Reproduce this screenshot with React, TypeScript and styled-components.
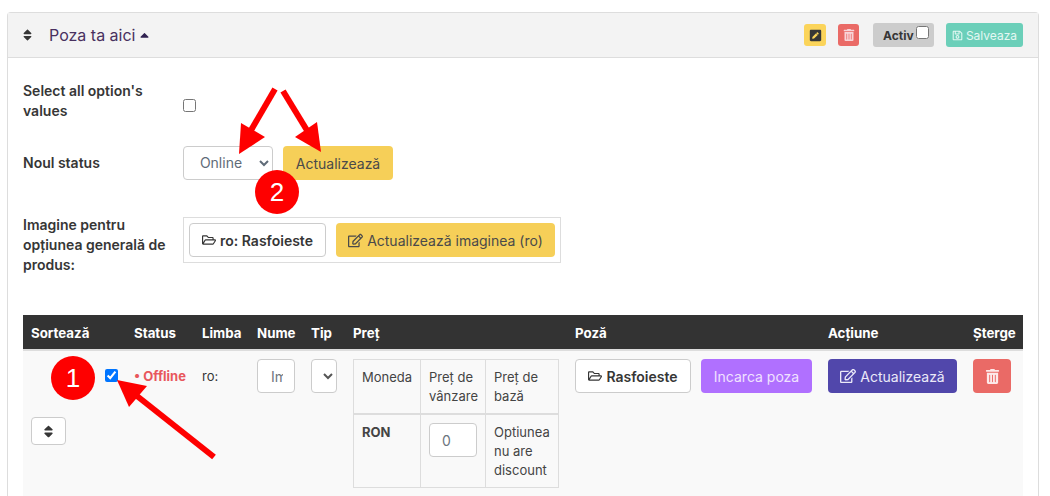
import React from "react";
import styled, { createGlobalStyle } from "styled-components";
import { FaSort, FaCaretUp, FaPenSquare, FaTrashAlt, FaRegSave, FaRegFolderOpen, FaRegEdit } from "react-icons/fa";

const Global = createGlobalStyle`
  html, body { margin: 0; padding: 0; background: #fff; height: 496px; overflow: hidden; }
  body { font-family: Inter, "Liberation Sans", sans-serif; color: #363636; font-size: 14px; }
  * { box-sizing: border-box; }
`;

const Page = styled.div`
  position: relative;
  height: 496px;
  padding: 12px 11px 0 7px;
  overflow: hidden;
`;

const Card = styled.section`
  border: 1px solid #ddd;
  border-bottom: 0;
  border-radius: 4px 4px 0 0;
  height: 520px;
`;

const CardHeader = styled.header`
  display: flex;
  align-items: center;
  height: 45px;
  padding: 0 15px;
  background: #f3f3f3;
  border-bottom: 1px solid #ddd;
`;

const SortGlyph = styled(FaSort)`
  width: 9px;
  height: 14px;
  color: #363636;
  margin-right: 17px;
`;

const Title = styled.span`
  font-size: 16px;
  color: #48305f;
`;

const Caret = styled(FaCaretUp)`
  width: 11px;
  height: 14px;
  color: #2f2150;
  margin-left: 4px;
`;

const Spacer = styled.div`
  flex: 1;
`;

const Mini = styled.button<{ $bg: string; $fg: string; $w: number; $mr: number }>`
  display: flex;
  align-items: center;
  justify-content: center;
  border: 0;
  padding: 0;
  width: ${(p) => p.$w}px;
  height: 22px;
  margin-right: ${(p) => p.$mr}px;
  border-radius: 3px;
  background: ${(p) => p.$bg};
  color: ${(p) => p.$fg};
  font-size: 12px;
`;

const ActiveBox = styled.label`
  display: flex;
  align-items: center;
  height: 24px;
  width: 61px;
  margin-right: 12px;
  padding-left: 10px;
  background: #ccc;
  border-radius: 3px;
  font-size: 12px;
  font-weight: 700;
  color: #363636;
`;

const ActiveCheck = styled.input`
  margin: -5px 0 0 2px;
  width: 13px;
  height: 13px;
`;

const SaveBtn = styled.button`
  display: flex;
  align-items: center;
  justify-content: center;
  gap: 3px;
  height: 24px;
  width: 77px;
  padding: 0;
  border: 0;
  border-radius: 3px;
  background: #6bcfb9;
  color: #e4f8f3;
  font: 400 12px Inter, sans-serif;
`;

const Body = styled.div`
  padding: 23px 15px 0;
`;

const Row = styled.div<{ $after: number; $align: string }>`
  display: grid;
  grid-template-columns: 160px 1fr;
  align-items: ${(p) => p.$align};
  margin-bottom: ${(p) => p.$after}px;
`;

const Label = styled.div`
  font-weight: 600;
  font-size: 14px;
  line-height: 20px;
  color: #363636;
  width: 150px;
`;

const Check = styled.input`
  margin: 9px 0 0;
  width: 13px;
  height: 13px;
  display: block;
`;

const StatusForm = styled.div`
  display: flex;
  gap: 10px;
`;

const Select = styled.select`
  width: 90px;
  height: 34px;
  padding: 0 4px 2px 2px;
  background: #fff;
  border: 1px solid #ccc;
  border-radius: 4px;
  font: 400 14px Inter, sans-serif;
  color: #5f6b78;
  text-align: center;
`;

const Button = styled.button<{ $bg?: string; $fg?: string; $w: number; $bold?: boolean }>`
  display: inline-flex;
  align-items: center;
  justify-content: center;
  gap: 4px;
  flex: none;
  width: ${(p) => p.$w}px;
  height: 34px;
  padding: 0;
  border: ${(p) => (p.$bg ? "0" : "1px solid #ccc")};
  border-radius: 4px;
  background: ${(p) => p.$bg ?? "#fff"};
  color: ${(p) => p.$fg ?? "#363636"};
  font: ${(p) => (p.$bold ? 600 : 400)} 14px Inter, sans-serif;
`;

const ImageBox = styled.div`
  display: inline-flex;
  justify-self: start;
  gap: 10px;
  margin-top: 2px;
  padding: 5px;
  border: 1px solid #ddd;
`;

const Table = styled.table`
  width: 1000px;
  table-layout: fixed;
  border-collapse: collapse;
`;

const Th = styled.th<{ $w: number }>`
  width: ${(p) => p.$w}px;
  height: 35px;
  padding: 2px 0 0 8px;
  background: #333;
  border-bottom: 2px solid #ddd;
  color: #fff;
  font-size: 13.3px;
  font-weight: 700;
  text-align: left;
  white-space: nowrap;
`;

const Td = styled.td<{ $top?: number }>`
  height: 150px;
  vertical-align: top;
  padding: ${(p) => p.$top ?? 8}px 8px 0;
  background: #f9f9f9;
  font-size: 13px;
  line-height: 20px;
`;

const PickCell = styled.div`
  display: flex;
  justify-content: flex-end;
  padding-top: 10px;
`;

const RowCheck = styled.input`
  margin: 0;
  width: 13px;
  height: 13px;
`;

const SortBtn = styled.button`
  display: flex;
  align-items: center;
  justify-content: center;
  margin-top: 35px;
  width: 35px;
  height: 28px;
  padding: 0;
  background: #fff;
  border: 1px solid #ccc;
  border-radius: 4px;
  color: #363636;
`;

const Offline = styled.span`
  font-weight: 700;
  color: #e8575c;
  white-space: nowrap;
`;

const TextInput = styled.input<{ $w: number; $left: number; $right: number }>`
  display: block;
  width: ${(p) => p.$w}px;
  height: 34px;
  padding: 0 ${(p) => p.$right}px 0 ${(p) => p.$left}px;
  background: #fff;
  border: 1px solid #ccc;
  border-radius: 4px;
  font: 400 14px Inter, sans-serif;
  color: #6c757d;
`;

const TypeSelect = styled.select`
  display: block;
  width: 26px;
  height: 34px;
  padding: 0;
  background: #fff;
  border: 1px solid #ccc;
  border-radius: 4px;
  color: #555;
`;

const PriceTable = styled.table`
  width: 206px;
  table-layout: fixed;
  border-collapse: collapse;
  font-size: 13px;
  line-height: 19px;
  border: 1px solid #ddd;
`;

const PriceCell = styled.td<{ $w?: number; $heavy?: boolean; $bold?: boolean }>`
  width: ${(p) => (p.$w ? `${p.$w}px` : "auto")};
  padding: 8px 8px 7px;
  vertical-align: top;
  border: 1px solid #ddd;
  border-bottom-width: ${(p) => (p.$heavy ? 2 : 1)}px;
  font-weight: ${(p) => (p.$bold ? 700 : 400)};
  color: #444;
`;

const PhotoRow = styled.div`
  display: flex;
  gap: 10px;
`;

const Annotations = styled.svg`
  position: absolute;
  left: 0;
  top: 0;
  width: 1050px;
  height: 496px;
  pointer-events: none;
`;

const Badge = styled.div<{ $x: number; $y: number }>`
  position: absolute;
  left: ${(p) => p.$x}px;
  top: ${(p) => p.$y}px;
  width: 44px;
  height: 44px;
  display: flex;
  align-items: center;
  justify-content: center;
  border-radius: 50%;
  background: #fe0000;
  color: #fff;
  font: 400 26px "Liberation Sans", sans-serif;
`;

export default function App() {
  return (
    <Page>
      <Global />
      <Card>
        <CardHeader>
          <SortGlyph />
          <Title>Poza ta aici</Title>
          <Caret />
          <Spacer />
          <Mini $bg="#fbd45a" $fg="#363636" $w={22} $mr={12}><FaPenSquare size={13} /></Mini>
          <Mini $bg="#ea6a66" $fg="#f8d4d8" $w={21} $mr={14}><FaTrashAlt size={12} /></Mini>
          <ActiveBox>Activ<ActiveCheck type="checkbox" /></ActiveBox>
          <SaveBtn><FaRegSave size={11} />Salveaza</SaveBtn>
        </CardHeader>
        <Body>
          <Row $after={25} $align="center">
            <Label>Select all option's values</Label>
            <Check type="checkbox" />
          </Row>
          <Row $after={35} $align="center">
            <Label>Noul status</Label>
            <StatusForm>
              <Select defaultValue="Online"><option>Online</option><option>Offline</option></Select>
              <Button $bg="#f6cf58" $fg="#4a4a4a" $w={110}>Actualizează</Button>
            </StatusForm>
          </Row>
          <Row $after={40} $align="start">
            <Label>Imagine pentru opțiunea generală de produs:</Label>
            <ImageBox>
              <Button $w={137} $bold><FaRegFolderOpen size={14} />ro: Rasfoieste</Button>
              <Button $bg="#f6cf58" $fg="#4a4a4a" $w={219}><FaRegEdit size={15} />Actualizează imaginea (ro)</Button>
            </ImageBox>
          </Row>
          <Table>
            <thead>
              <tr>
                <Th $w={103}>Sortează</Th>
                <Th $w={68}>Status</Th>
                <Th $w={55}>Limba</Th>
                <Th $w={54}>Nume</Th>
                <Th $w={42}>Tip</Th>
                <Th $w={222}>Preț</Th>
                <Th $w={253}>Poză</Th>
                <Th $w={145}>Acțiune</Th>
                <Th $w={58}>Șterge</Th>
              </tr>
            </thead>
            <tbody>
              <tr>
                <Td>
                  <PickCell><RowCheck type="checkbox" defaultChecked /></PickCell>
                  <SortBtn><FaSort size={15} /></SortBtn>
                </Td>
                <Td $top={15}><Offline>• Offline</Offline></Td>
                <Td $top={15}>ro:</Td>
                <Td><TextInput $w={38} $left={13} $right={11} defaultValue="Imagine" /></Td>
                <Td><TypeSelect><option></option></TypeSelect></Td>
                <Td>
                  <PriceTable>
                    <tbody>
                      <tr>
                        <PriceCell $w={67} $heavy>Moneda</PriceCell>
                        <PriceCell $w={65} $heavy>Preț de vânzare</PriceCell>
                        <PriceCell $heavy>Preț de bază</PriceCell>
                      </tr>
                      <tr>
                        <PriceCell $bold>RON</PriceCell>
                        <PriceCell><TextInput $w={48} $left={12} $right={12} defaultValue="0" /></PriceCell>
                        <PriceCell>Optiunea nu are discount</PriceCell>
                      </tr>
                    </tbody>
                  </PriceTable>
                </Td>
                <Td>
                  <PhotoRow>
                    <Button $w={116} $bold><FaRegFolderOpen size={14} />Rasfoieste</Button>
                    <Button $bg="#b070ff" $fg="#f0e2ff" $w={111}>Incarca poza</Button>
                  </PhotoRow>
                </Td>
                <Td><Button $bg="#5147ab" $fg="#ebe9f8" $w={129}><FaRegEdit size={16} />Actualizează</Button></Td>
                <Td><Button $bg="#ea6a66" $fg="#fde9e9" $w={38}><FaTrashAlt size={15} /></Button></Td>
              </tr>
            </tbody>
          </Table>
        </Body>
      </Card>
      <Annotations viewBox="0 0 1050 496">
        <g fill="#fe0000" stroke="#fe0000">
          <line x1="275" y1="89" x2="250" y2="132" strokeWidth="6" />
          <polygon points="239,154 241,123 265,137" strokeWidth="0" />
          <line x1="283" y1="91" x2="308" y2="132" strokeWidth="6" />
          <polygon points="321,152 317,122 295,137" strokeWidth="0" />
          <line x1="214" y1="457" x2="137" y2="396" strokeWidth="6" />
          <polygon points="117,380 147,386 129,407" strokeWidth="0" />
        </g>
      </Annotations>
      <Badge $x={51} $y={356}>1</Badge>
      <Badge $x={255} $y={170}>2</Badge>
    </Page>
  );
}
